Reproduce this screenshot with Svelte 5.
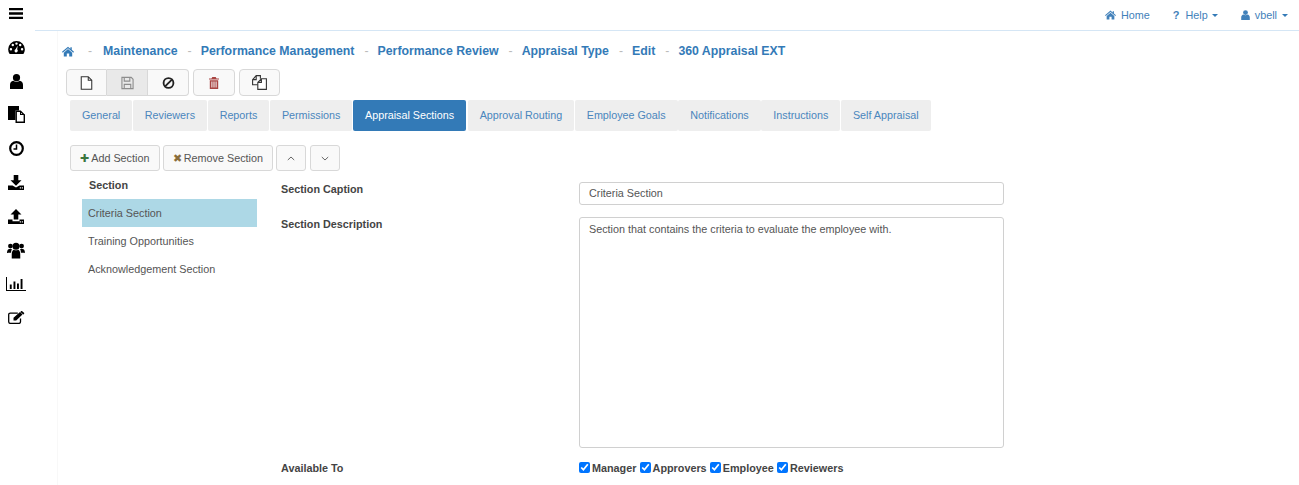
<script lang="ts">
	// Page data
	const crumbs = ['Maintenance', 'Performance Management', 'Performance Review', 'Appraisal Type', 'Edit', '360 Appraisal EXT'];
	const tabs = ['General', 'Reviewers', 'Reports', 'Permissions', 'Appraisal Sections', 'Approval Routing', 'Employee Goals', 'Notifications', 'Instructions', 'Self Appraisal'];
	const sections = ['Criteria Section', 'Training Opportunities', 'Acknowledgement Section'];
	const audiences = ['Manager', 'Approvers', 'Employee', 'Reviewers'];

	let activeTab = $state('Appraisal Sections');
	let activeSection = $state('Criteria Section');
</script>

{#snippet home()}
	<svg viewBox="0 0 16 14" class="ico-home"><path fill="currentColor" d="M8 0.6 L11.2 3.3 V1.4 H13 V4.8 L16 7.4 L15 8.5 L8 2.6 L1 8.5 L0 7.4 Z M8 3.8 L13.600 8.500 V13.600 H9.600 V9.700 H6.400 V13.600 H2.400 V8.500 Z" /></svg>
{/snippet}

{#snippet user()}
	<svg viewBox="0 0 12 14" class="ico-user"><circle cx="6" cy="3.6" r="3.4" fill="currentColor" /><path fill="currentColor" d="M0 14 V10.4 C0 8.2 1.4 6.8 3.2 6.4 C4.8 7.6 7.2 7.6 8.8 6.4 C10.6 6.8 12 8.2 12 10.4 V14 Z" /></svg>
{/snippet}

<div class="page">
	<nav class="rail">
		<svg viewBox="0 0 14 11" class="i-bars"><path d="M0 0h14v2.300H0zM0 4.350h14v2.300H0zM0 8.700h14V11H0z" fill="#000" /></svg>
		<svg viewBox="0 0 18 14" class="i-gauge"><path fill="#000" fill-rule="evenodd" d="M9 0a9 9 0 0 1 9 9c0 2-.6 3.600-1.600 5H1.600A8.600 8.600 0 0 1 0 9a9 9 0 0 1 9-9zM3 7.500a1.300 1.300 0 1 0 0 2.600 1.300 1.300 0 0 0 0-2.600zM5 3a1.300 1.300 0 1 0 0 2.600A1.300 1.300 0 0 0 5 3zM9 1.500a1.300 1.300 0 1 0 0 2.600 1.300 1.300 0 0 0 0-2.600zM13 3a1.300 1.300 0 1 0 0 2.600A1.300 1.300 0 0 0 13 3zM15 7.500a1.300 1.300 0 1 0 0 2.600 1.300 1.300 0 0 0 0-2.600zM10.300 5 8 9a1.700 1.700 0 1 0 2.300 1.800c.3-.7 0-1.300-.6-1.700z" /></svg>
		<svg viewBox="0 0 13 15" class="i-user"><circle cx="6.500" cy="3.700" r="3.600" fill="#000" /><path fill="#000" d="M0 15V10.800C0 8.600 1.400 7.200 3.200 6.800C5 8 8 8 9.800 6.800C11.600 7.200 13 8.600 13 10.800V15Z" /></svg>
		<svg viewBox="0 0 17 17" class="i-files"><path fill="#000" d="M0 0h11v4.500H7.500V14H0z" /><path fill="#fff" stroke="#000" stroke-width="1.400" d="M8.200 5.200h4.300l3.800 3.800v7.300H8.200z" /><path fill="#000" d="M12 5h1v3h3.500v1H12z" /></svg>
		<svg viewBox="0 0 15 15" class="i-clock"><circle cx="7.500" cy="7.500" r="6.300" fill="none" stroke="#000" stroke-width="2.200" /><path d="M7.500 3.500v4.400H4.500" fill="none" stroke="#000" stroke-width="1.500" /></svg>
		<svg viewBox="0 0 16 15" class="i-load"><path fill="#000" d="M5.700 0h4.600v5.200h3.200L8 10.700 2.500 5.200h3.200zM0 10.500h4.500L8 12.500l3.500-2H16V15H0z" /><path fill="#fff" d="M11.800 12.300h1.100v1.100h-1.100zM13.800 12.300h1.100v1.100h-1.100z" /></svg>
		<svg viewBox="0 0 16 15" class="i-load"><path fill="#000" d="M8 0 13.500 5.600h-3.200v5H5.700v-5H2.500zM0 10.500h4.500v1.700h7v-1.700H16V15H0z" /><path fill="#fff" d="M11.800 12.300h1.100v1.100h-1.100zM13.800 12.300h1.100v1.100h-1.100z" /></svg>
		<svg viewBox="0 0 19 17" class="i-users"><g fill="#000"><circle cx="3.600" cy="3.800" r="2.500" /><circle cx="15.400" cy="3.800" r="2.500" /><circle cx="9.500" cy="4" r="3.700" /><path d="M0 11.400C0 8.600 1 7 2.600 7h2.600c-.6 1-.9 2.400-.9 4H2c-.8 0-2 .4-2 .4zM19 11.400C19 8.600 18 7 16.400 7h-2.600c.6 1 .9 2.400.9 4H17c.8 0 2 .4 2 .4z" /><path d="M5 17v-4.600C5 9.600 6 8 7.200 7.600c1.400 1 3.200 1 4.600 0C13 8 14 9.600 14 12.400V17z" /></g></svg>
		<svg viewBox="0 0 20 14" class="i-chart"><path fill="#000" d="M0 0h1v13H20v1H0zM3.800 7.500h1.900v4.500H3.800zM7.500 4.500h1.900v7.500H7.500zM11 6.500h1.900v5.500H11zM14.600 2h1.900v10h-1.900z" /></svg>
		<svg viewBox="0 0 17 13" class="i-edit"><path fill="none" stroke="#000" stroke-width="1.300" d="M12.500 7.500v3.300a1.600 1.600 0 0 1-1.600 1.600H2.300a1.600 1.600 0 0 1-1.600-1.600V3.700a1.600 1.600 0 0 1 1.600-1.600h7.500" /><path fill="#000" d="M5.500 6.700 12 .9l2.500 2.500L8.200 9.500H5.500zM13 .2a1 1 0 0 1 1.200 0l1.800 1.600a.8.800 0 0 1 0 1.100l-.8.700-2.800-2.700z" /></svg>
	</nav>

	<div class="main">
		<header class="topbar">
			<a class="toplink">{@render home()}Home</a>
			<a class="toplink"><b class="qmark">?</b>Help<i class="caret"></i></a>
			<a class="toplink">{@render user()}vbell<i class="caret wide"></i></a>
		</header>

		<div class="content">
			<div class="breadcrumb">
				<span class="crumb-home">{@render home()}</span>
				{#each crumbs as crumb}
					<span class="sep">-</span>
					<a>{crumb}</a>
				{/each}
			</div>

			<div class="toolbar">
				<div class="btn-group">
					<button class="tool" aria-label="New">
						<svg viewBox="0 0 14 16" class="t-ico"><path fill="#fff" stroke="#333" stroke-width="1.200" d="M1 .8h8l4 4V15.200H1z M9 .8v4h4" /></svg>
					</button>
					<button class="tool disabled" aria-label="Save">
						<svg viewBox="0 0 14 14" class="t-ico"><path fill="none" stroke="#8d8d8d" stroke-width="1.200" d="M1 1h10l2 2v10H1z M3.500 1v4h6V1 M3.500 13V8.500h7V13" /></svg>
					</button>
					<button class="tool" aria-label="Cancel">
						<svg viewBox="0 0 14 14" class="t-ico"><circle cx="7" cy="7" r="5.300" fill="none" stroke="#222" stroke-width="2" /><path d="M3.300 10.700 10.700 3.300" stroke="#222" stroke-width="2" /></svg>
					</button>
				</div>
				<button class="tool single" aria-label="Delete">
					<svg viewBox="0 0 10 12" class="t-trash"><path fill="#a94442" fill-rule="evenodd" d="M3.300 0h3.400l.8 1.500H10v1H0v-1h2.500zM.8 3.200h8.400V12H.8zM2.400 4.500v6h1v-6zM4.500 4.500v6h1v-6zM6.600 4.500v6h1v-6z" /></svg>
				</button>
				<button class="tool single" aria-label="Copy">
					<svg viewBox="0 0 15 15" class="t-copy"><path fill="none" stroke="#333" stroke-width="1.100" d="M5.800 9.800H.6V4.600L4.200.6h4.200v3.200 M4.200.6v4H.6" /><path fill="#fff" stroke="#333" stroke-width="1.100" d="M5.800 7.400 9.400 3.800h5v10.600H5.800z M9.400 3.800v3.600H5.800" /></svg>
				</button>
			</div>

			<div class="tabs">
				{#each tabs as tab}
					<button class="tab" class:active={tab === activeTab} onclick={() => (activeTab = tab)}>{tab}</button>
				{/each}
			</div>

			<div class="actions">
				<button class="btn"><span class="plus">✚</span>Add Section</button>
				<button class="btn"><span class="cross">✖</span>Remove Section</button>
				<button class="btn arrow" aria-label="Up">
					<svg viewBox="0 0 8 5"><path d="M.8 4 4 1l3.200 3" fill="none" stroke="#555" stroke-width=".9" /></svg>
				</button>
				<button class="btn arrow" aria-label="Down">
					<svg viewBox="0 0 8 5"><path d="M.8 1 4 4l3.200-3" fill="none" stroke="#555" stroke-width=".9" /></svg>
				</button>
			</div>

			<div class="editor">
				<div class="section-list">
					<div class="list-head">Section</div>
					{#each sections as section}
						<button class="section-item" class:selected={section === activeSection} onclick={() => (activeSection = section)}>{section}</button>
					{/each}
				</div>

				<div class="form">
					<div class="form-row caption">
						<label for="caption">Section Caption</label>
						<input id="caption" type="text" value="Criteria Section" />
					</div>
					<div class="form-row description">
						<label for="description">Section Description</label>
						<textarea id="description">Section that contains the criteria to evaluate the employee with.</textarea>
					</div>
					<div class="form-row available">
						<span class="label">Available To</span>
						<div class="checks">
							{#each audiences as who}
								<label class="check"><input type="checkbox" checked />{who}</label>
							{/each}
						</div>
					</div>
				</div>
			</div>
		</div>
	</div>
</div>

<style>
	:global(body) {
		margin: 0;
		background: #fff;
		font-family: "Liberation Sans", Arial, sans-serif;
		font-size: 10.800px;
		color: #555;
	}

	.page {
		display: flex;
		height: 485px;
		overflow: hidden;
	}

	/* icons sit on an even pitch, centred in their slot */
	.rail {
		flex: 0 0 32px;
		margin: -3.400px 3px 0 0;
		display: grid;
		grid-auto-rows: 33.800px;
		align-content: start;
		justify-items: center;
		align-items: center;
	}

	.rail svg {
		display: block;
	}

	.i-bars { width: 14px; height: 11px; }
	.i-gauge { width: 17px; height: 13px; }
	.i-user { width: 13px; height: 15px; }
	.i-files { width: 17px; height: 17px; }
	.i-clock { width: 15px; height: 15px; }
	.i-load { width: 16px; height: 15px; }
	.i-users { width: 18px; height: 17px; }
	.i-chart { width: 20px; height: 14px; }
	.i-edit { width: 17px; height: 13px; }

	.main {
		flex: 1;
		min-width: 0;
		display: flex;
		flex-direction: column;
	}

	.topbar {
		flex: 0 0 31px;
		box-sizing: border-box;
		border-bottom: 1px solid #d5e6f5;
		display: flex;
		justify-content: flex-end;
		align-items: center;
		gap: 23px;
		padding: 0 11px 0 0;
	}

	.toplink {
		display: flex;
		align-items: center;
		color: #4281ba;
		font-size: 10.800px;
	}

	.ico-home {
		width: 11px;
		height: 10px;
		margin-right: 5px;
	}

	.ico-user {
		width: 9px;
		height: 10px;
		margin-right: 5px;
	}

	.qmark {
		font-size: 11px;
		margin-right: 6px;
	}

	.caret {
		width: 0;
		height: 0;
		margin-left: 4px;
		border-top: 3px solid #337ab7;
		border-left: 3px solid transparent;
		border-right: 3px solid transparent;
	}

	.caret.wide {
		margin-left: 5px;
	}

	.content {
		flex: 1;
		margin-left: 22px;
		border-left: 1px solid #f8f8f8;
		padding: 12px 0 0 4px;
	}

	.breadcrumb {
		display: flex;
		align-items: center;
		height: 16px;
		font-size: 12.300px;
		font-weight: bold;
		color: #337ab7;
	}

	.breadcrumb a {
		color: #337ab7;
	}

	.crumb-home {
		display: flex;
		width: 13px;
		color: #337ab7;
	}

	.crumb-home .ico-home {
		width: 12px;
		height: 11px;
		margin: 0;
	}

	.sep {
		color: #bbb;
		font-weight: normal;
		margin: 0 9px 0 10px;
	}

	.crumb-home + .sep {
		margin-left: 13px;
		margin-right: 11px;
	}

	.toolbar {
		display: flex;
		gap: 4px;
		margin: 10px 0 0 4px;
	}

	.btn-group {
		display: flex;
	}

	button {
		font-family: inherit;
		cursor: pointer;
	}

	.tool {
		width: 41px;
		height: 27px;
		padding: 0;
		background: #f9f9f9;
		border: 1px solid #d8d8d8;
		border-left-width: 0;
		display: flex;
		align-items: center;
		justify-content: center;
	}

	.tool:first-child {
		border-left-width: 1px;
		border-radius: 4px 0 0 4px;
	}

	.tool:last-child {
		border-radius: 0 4px 4px 0;
	}

	.tool.single {
		border: 1px solid #d8d8d8;
		border-radius: 4px;
		width: 42px;
	}

	.tool.single:last-child {
		width: 41px;
	}

	.tool.disabled {
		background: #e9e9e9;
	}

	.t-ico {
		width: 13px;
		height: 14px;
	}

	.t-trash {
		width: 10px;
		height: 12px;
	}

	.t-copy {
		width: 15px;
		height: 15px;
	}

	.tabs {
		display: flex;
		gap: 0.600px;
		margin: 4px 0 0 8px;
	}

	.tab {
		height: 31px;
		padding: 0 12px 1px;
		border: none;
		border-radius: 2px;
		background: #eee;
		color: #4a86bd;
		font-size: 10.750px;
		white-space: nowrap;
	}

	.tab.active {
		background: #337ab7;
		color: #fff;
		margin-right: 1px;
	}

	.actions {
		display: flex;
		gap: 3px;
		margin: 14px 0 0 8px;
	}

	.btn {
		height: 26px;
		padding: 0 9.200px;
		border: 1px solid #d8d8d8;
		border-radius: 3px;
		background: #f9f9f9;
		color: #555;
		font-size: 10.800px;
		white-space: nowrap;
	}

	.btn.arrow {
		width: 30px;
		padding: 0;
		display: flex;
		align-items: center;
		justify-content: center;
	}

	.btn.arrow + .btn.arrow {
		margin-left: 1px;
	}

	.btn.arrow svg {
		width: 8px;
		height: 5px;
	}

	.plus {
		color: #3c763d;
		margin-right: 2px;
	}

	.cross {
		color: #8a6d3b;
		margin-right: 2px;
	}

	.editor {
		display: flex;
		margin-left: 20px;
	}

	.section-list {
		flex: 0 0 175px;
		display: flex;
		flex-direction: column;
	}

	.list-head {
		height: 28px;
		padding: 8px 0 0 7px;
		box-sizing: border-box;
		font-weight: bold;
		color: #444;
	}

	.section-item {
		height: 28px;
		padding: 0 0 0 6px;
		border: none;
		background: none;
		text-align: left;
		font-size: 10.800px;
		color: #555;
	}

	.section-item.selected {
		background: #add8e6;
	}

	.form {
		flex: 0 0 723px;
		margin-left: 24px;
		padding-top: 11px;
	}

	.form-row {
		display: flex;
	}

	.form-row > label,
	.form-row > .label {
		flex: 0 0 298px;
		font-weight: bold;
		color: #444;
		padding-top: 1px;
	}

	.form-row input[type="text"],
	textarea {
		flex: 1;
		box-sizing: border-box;
		border: 1px solid #d0d0d0;
		border-radius: 3px;
		font-family: inherit;
		font-size: 10.800px;
		color: #555;
		padding: 0 9px;
	}

	.form-row input[type="text"] {
		height: 23px;
		padding-bottom: 1px;
	}

	.description {
		margin-top: 12px;
	}

	textarea {
		height: 231px;
		padding-top: 5px;
		resize: none;
	}

	.available {
		margin-top: 13px;
	}

	.checks {
		display: flex;
		gap: 3.200px;
	}

	.check {
		display: flex;
		align-items: center;
		font-weight: bold;
		color: #444;
	}

	.check input {
		width: 11px;
		height: 11px;
		margin: 0 2px 0 0;
	}
</style>
